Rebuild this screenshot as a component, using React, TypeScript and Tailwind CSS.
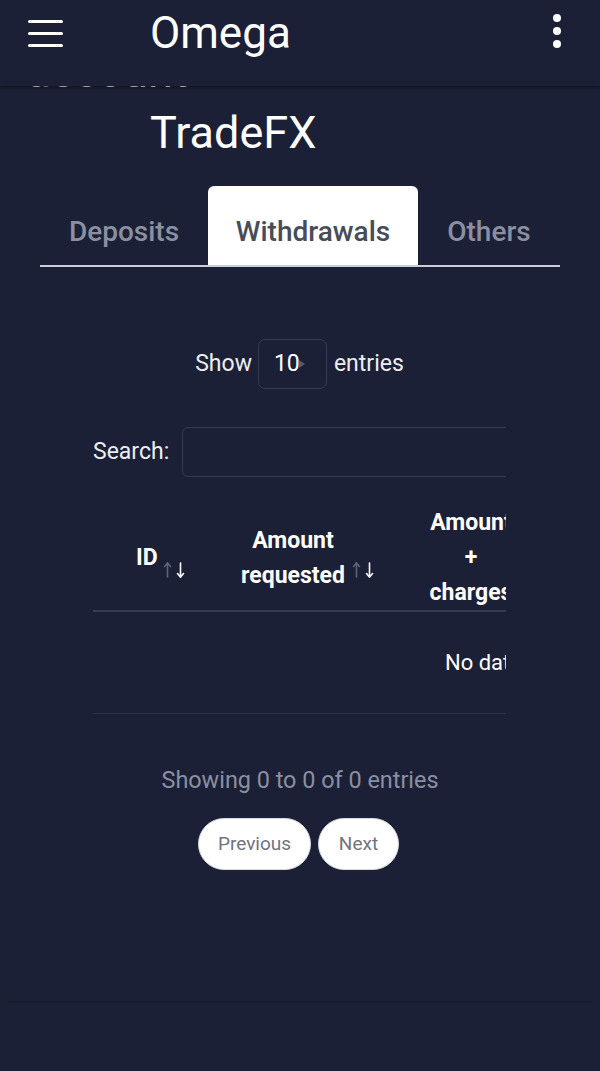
import React from "react";

function SortArrows() {
  return (
    <svg width="23" height="18" viewBox="0 0 23 18" className="shrink-0">
      <g stroke="#5d6378" strokeWidth="1.6" fill="none" strokeLinecap="round">
        <line x1="4.5" y1="2" x2="4.5" y2="16" />
        <polyline points="1.5,5.5 4.5,2 7.5,5.5" />
      </g>
      <g stroke="#ffffff" strokeWidth="1.6" fill="none" strokeLinecap="round">
        <line x1="17.5" y1="2" x2="17.5" y2="16" />
        <polyline points="14.5,12.5 17.5,16 20.5,12.5" />
      </g>
    </svg>
  );
}

export default function App() {
  return (
    <div
      className="min-h-[1071px] w-[600px] bg-[#1b2036] text-white overflow-hidden"
      style={{ fontFamily: "Roboto, 'Noto Sans', sans-serif" }}
    >
      {/* Header */}
      <header className="relative z-10 h-[86px] bg-[#1b2036] shadow-[0_2px_3px_rgba(0,0,0,0.35)]">
        <div className="flex h-[66px] items-center pl-[28px]">
          <div className="flex w-[35px] flex-col gap-[9px]">
            <span className="block h-[3px] w-[35px] rounded-full bg-white" />
            <span className="block h-[3px] w-[35px] rounded-full bg-white" />
            <span className="block h-[3px] w-[35px] rounded-full bg-white" />
          </div>
          <span className="ml-[87px] text-[44px] leading-[44px] text-white">Omega</span>
          <div className="ml-auto mr-[39px] -mt-[4px] flex flex-col gap-[5px]">
            <span className="block h-[8px] w-[8px] rounded-full bg-white" />
            <span className="block h-[8px] w-[8px] rounded-full bg-white" />
            <span className="block h-[8px] w-[8px] rounded-full bg-white" />
          </div>
        </div>
      </header>

      {/* Scrolled title */}
      <div className="-mt-[37px] pl-[26px] text-[45px] leading-[45px] text-[#e6e8ef]">account</div>
      <div className="mt-[16px] pl-[150px] text-[45px] leading-[45px] text-white">TradeFX</div>

      {/* Tabs */}
      <div className="mx-[40px] mt-[31px] flex border-b-2 border-[#c9ced8]">
        <div className="flex h-[79px] w-[168px] items-center justify-center pt-[12px] text-[28px] font-medium text-[#8a90a2]">
          Deposits
        </div>
        <div className="flex h-[79px] w-[210px] items-center justify-center rounded-t-[6px] bg-white pt-[12px] text-[28px] font-medium text-[#474c57]">
          Withdrawals
        </div>
        <div className="flex h-[79px] w-[142px] items-center justify-center pt-[12px] text-[28px] font-medium text-[#8a90a2]">
          Others
        </div>
      </div>

      {/* Table wrapper */}
      <div className="mx-[93px] w-[413px] overflow-hidden">
        <div className="mt-[72px] flex h-[50px] items-center justify-center text-[23px] text-[#eceef3]">
          <span>Show</span>
          <div className="relative ml-[6px] flex h-[50px] w-[69px] items-center rounded-[7px] border border-[#363c55] pl-[15px]">
            <span className="text-[23px] text-white">10</span>
            <svg width="8" height="10" viewBox="0 0 8 10" className="-ml-[2px]">
              <path d="M1 1 L7 5 L1 9 Z" fill="#555a6c" />
            </svg>
          </div>
          <span className="ml-[7px]">entries</span>
        </div>

        <div className="mt-[38px] flex h-[50px] w-[600px] items-center">
          <span className="text-[23px] text-[#eceef3]">Search:</span>
          <div className="ml-[13px] h-[50px] w-[400px] rounded-[6px] border border-[#363c55]" />
        </div>

        {/* Table header */}
        <div className="mt-[28px] flex h-[107px] w-[700px] items-center border-b-2 border-[#363c56] text-[23px] font-bold leading-[35px] text-white">
          <div className="w-[43px] shrink-0" />
          <div className="w-[22px] shrink-0">ID</div>
          <div className="ml-[5px] mt-[24px] w-[23px] shrink-0">
            <SortArrows />
          </div>
          <div className="ml-[48px] w-[118px] shrink-0 text-center">
            <div>Amount</div>
            <div>requested</div>
          </div>
          <div className="mt-[24px] w-[23px] shrink-0">
            <SortArrows />
          </div>
          <div className="ml-[46px] w-[100px] shrink-0 text-center">
            <div>Amount</div>
            <div>+</div>
            <div>charges</div>
          </div>
        </div>

        {/* Empty row */}
        <div className="flex h-[102px] w-[700px] items-center border-b border-[#2a3049] pl-[352px] text-[22px] text-white">
          No data available in table
        </div>
      </div>

      {/* Info + pagination */}
      <div className="mt-[51px] text-center text-[23.4px] leading-[30px] text-[#8a90a2]">
        Showing 0 to 0 of 0 entries
      </div>
      <div className="mt-[23px] flex justify-center gap-[7px] pr-[3px]">
        <div className="flex h-[52px] w-[113px] items-center justify-center rounded-full border border-[#d6d9df] bg-white text-[19px] text-[#6f7480]">
          Previous
        </div>
        <div className="flex h-[52px] w-[81px] items-center justify-center rounded-full border border-[#d6d9df] bg-white text-[19px] text-[#6f7480]">
          Next
        </div>
      </div>

      {/* Footer line */}
      <div className="mx-[8px] mt-[131px] h-[70px] border-t-2 border-[#181c2f]" />
    </div>
  );
}
